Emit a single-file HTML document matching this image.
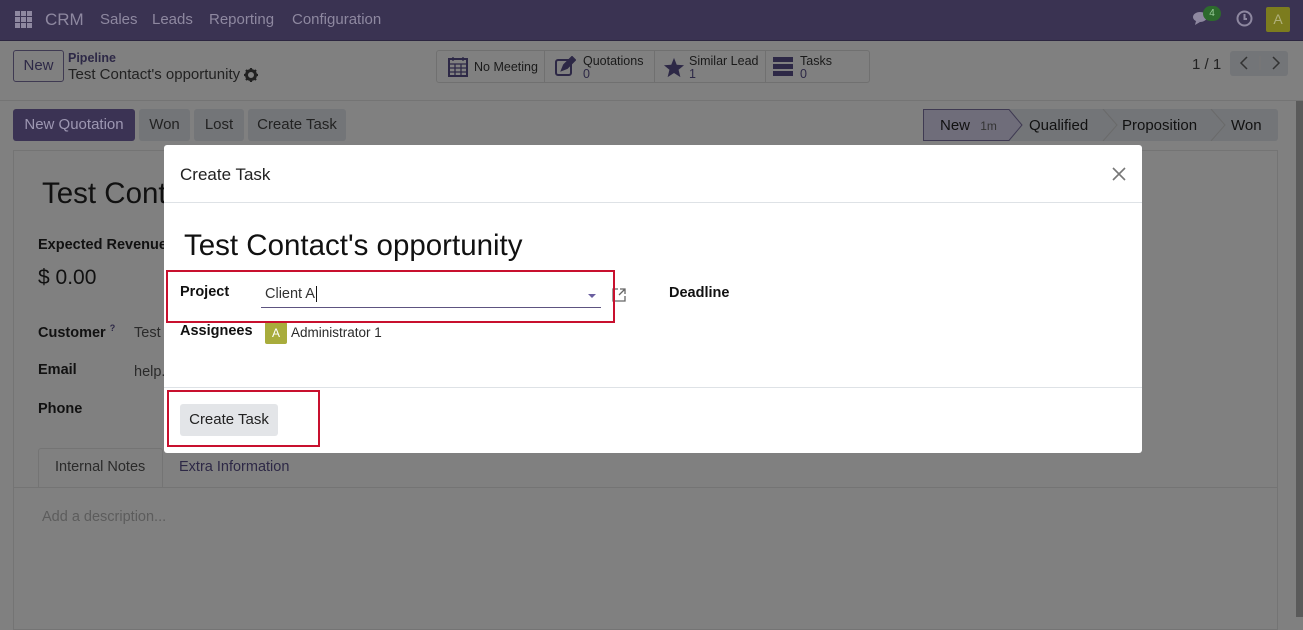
<!DOCTYPE html>
<html><head><meta charset="utf-8"><style>
*{box-sizing:border-box;margin:0;padding:0}
body{width:1303px;height:617px;overflow:hidden;background:#808080;font-family:"Liberation Sans","DejaVu Sans",sans-serif;position:relative;color:#111}
.abs{position:absolute}
.nav{left:0;top:0;width:1303px;height:41px;background:#3a3352;border-bottom:1px solid #2c2640}
.nav span{position:absolute;top:11px;font-size:15px;color:#8e88a0}
.cp{left:0;top:41px;width:1303px;height:60px;background:#808080;border-bottom:1px solid #747474}
.btn{position:absolute;border-radius:3px;font-size:15px;text-align:center;line-height:32px;height:32px;background:#737578;color:#222}
.sheet{left:13px;top:150px;width:1265px;height:480px;border:1px solid #747474;background:#808080}
.lbl{position:absolute;font-size:14.5px;font-weight:bold;color:#111}
.val{position:absolute;font-size:14.5px;color:#2a2a2a}
.modal{left:164px;top:145px;width:978px;height:308px;background:#fff;border-radius:3px}
.red{position:absolute;border:2px solid #c8102e}
.stat{position:absolute;top:51px;height:32px;border-right:1px solid #707070;font-size:12.5px;color:#1a1a1a;line-height:13px}
</style></head><body>
<div class="abs nav">
  <svg class="abs" style="left:15px;top:11px" width="17" height="17" viewBox="0 0 17 17" fill="#8e88a0"><rect x="0" y="0" width="5" height="5"/><rect x="6" y="0" width="5" height="5"/><rect x="12" y="0" width="5" height="5"/><rect x="0" y="6" width="5" height="5"/><rect x="6" y="6" width="5" height="5"/><rect x="12" y="6" width="5" height="5"/><rect x="0" y="12" width="5" height="5"/><rect x="6" y="12" width="5" height="5"/><rect x="12" y="12" width="5" height="5"/></svg>
  <span style="left:45px;font-size:17px;top:10px">CRM</span>
  <span style="left:100px">Sales</span>
  <span style="left:152px">Leads</span>
  <span style="left:209px">Reporting</span>
  <span style="left:292px">Configuration</span>
  <svg class="abs" style="left:1192px;top:10px" width="20" height="18" viewBox="0 0 20 18" fill="#8e88a0"><ellipse cx="8" cy="7" rx="7" ry="5"/><path d="M4 11 L3 15 L8 12Z"/></svg>
  <div class="abs" style="left:1203px;top:6px;width:18px;height:15px;border-radius:8px;background:#2d6a2d;color:#9c9;font-size:10px;text-align:center;line-height:15px">4</div>
  <svg class="abs" style="left:1236px;top:10px" width="17" height="17" viewBox="0 0 17 17" fill="none" stroke="#8e88a0" stroke-width="2"><circle cx="8.5" cy="8.5" r="7"/><path d="M8.5 4V9H11"/></svg>
  <div class="abs" style="left:1266px;top:7px;width:24px;height:25px;background:#7c7c1e;color:#b0b07a;font-size:14px;text-align:center;line-height:25px;border-radius:2px">A</div>
</div>
<div class="abs cp">
  <div class="abs" style="left:13px;top:9px;width:51px;height:32px;border:1px solid #3f3a52;border-radius:3px;font-size:15px;color:#2d2846;text-align:center;line-height:30px">New</div>
  <div class="abs" style="left:68px;top:10px;font-size:12.5px;font-weight:bold;color:#2d2846">Pipeline</div>
  <div class="abs" style="left:68px;top:25px;font-size:15px;color:#222">Test Contact's opportunity</div>
  <svg class="abs" style="left:244px;top:27px" width="14" height="14" viewBox="0 0 14 14"><circle cx="7" cy="7" r="4.5" fill="none" stroke="#222" stroke-width="3"/><path d="M7 0V3M7 11V14M0 7H3M11 7H14M2 2L4 4M10 10L12 12M12 2L10 4M4 10L2 12" stroke="#222" stroke-width="2.2"/></svg>
  <div class="abs" style="left:436px;top:9px;width:434px;height:33px;border:1px solid #707070;border-radius:3px"></div>
</div>
<div class="stat" style="left:437px;width:108px"><svg class="abs" style="left:11px;top:5px" width="20" height="21" viewBox="0 0 20 21" fill="none" stroke="#2d2846" stroke-width="2"><rect x="1" y="3" width="18" height="17"/><path d="M1 8H19M5 1V5M15 1V5M1 12H19M1 16H19M7 8V20M13 8V20" stroke-width="1.3"/></svg><span class="abs" style="left:37px;top:10px;white-space:nowrap">No Meeting</span></div>
<div class="stat" style="left:545px;width:110px"><svg class="abs" style="left:9px;top:5px" width="22" height="21" viewBox="0 0 22 21" fill="none" stroke="#2d2846" stroke-width="2"><rect x="2" y="4" width="15" height="15" rx="2"/><path d="M8 14L10 9 18 1 21 4 13 12Z" fill="#2d2846"/></svg><span class="abs" style="left:38px;top:4px">Quotations<br><b style="font-weight:normal;color:#2d2846">0</b></span></div>
<div class="stat" style="left:655px;width:111px"><svg class="abs" style="left:8px;top:6px" width="22" height="21" viewBox="0 0 24 23"><path d="M12 1L15 8.5 23 9 17 14 19 22 12 17.5 5 22 7 14 1 9 9 8.5Z" fill="#2d2846"/></svg><span class="abs" style="left:34px;top:4px;white-space:nowrap">Similar Lead<br><span style="color:#2d2846">1</span></span></div>
<div class="stat" style="left:766px;width:104px;border:none"><svg class="abs" style="left:7px;top:6px" width="20" height="20" viewBox="0 0 20 20" fill="#2d2846"><rect x="0" y="0" width="20" height="5"/><rect x="0" y="7" width="20" height="5"/><rect x="0" y="14" width="20" height="5"/></svg><span class="abs" style="left:34px;top:4px">Tasks<br><span style="color:#2d2846">0</span></span></div>
<div class="abs" style="left:1192px;top:56px;font-size:15px;color:#222">1 / 1</div>
<div class="abs" style="left:1230px;top:51px;width:58px;height:25px;background:#737578;border-radius:3px"></div>
<svg class="abs" style="left:1238px;top:56px" width="44" height="14" viewBox="0 0 44 14" fill="none" stroke="#333" stroke-width="1.5"><path d="M9 1L3 7 9 13M35 1L41 7 35 13"/><path d="M22 0V14" stroke="#777"/></svg>
<div class="btn" style="left:13px;top:109px;width:122px;background:#3b3354;color:#9d97b2">New Quotation</div>
<div class="btn" style="left:139px;top:109px;width:51px">Won</div>
<div class="btn" style="left:194px;top:109px;width:50px">Lost</div>
<div class="btn" style="left:248px;top:109px;width:98px">Create Task</div>
<div class="abs" style="left:923px;top:109px;width:355px;height:32px;background:#737578;border-radius:3px"></div>
<svg class="abs" style="left:923px;top:109px" width="355" height="32" viewBox="0 0 355 32"><path d="M0.5 0.5H86L99 16 86 31.5H0.5Z" fill="#6f6d7a" stroke="#3f3a52"/><path d="M180 0L194 16 180 32M288 0L302 16 288 32" fill="none" stroke="#6a6a6a"/></svg>
<div class="abs" style="left:940px;top:117px;font-size:15px">New <span style="font-size:12px;color:#333;margin-left:6px">1m</span></div>
<div class="abs" style="left:1029px;top:117px;font-size:15px">Qualified</div>
<div class="abs" style="left:1122px;top:117px;font-size:15px">Proposition</div>
<div class="abs" style="left:1231px;top:117px;font-size:15px">Won</div>
<div class="abs" style="left:1296px;top:101px;width:7px;height:516px;background:#5a5a5a"></div>
<div class="abs sheet"></div>
<div class="abs" style="left:42px;top:177px;font-size:29.5px;color:#111">Test Contact's opportunity</div>
<div class="lbl" style="left:38px;top:237px">Expected Revenue</div>
<div class="abs" style="left:38px;top:266px;font-size:21px">$ 0.00</div>
<div class="lbl" style="left:38px;top:323px">Customer <sup style="font-size:9px;color:#2d2846">?</sup></div>
<div class="val" style="left:134px;top:325px">Test Contact</div>
<div class="lbl" style="left:38px;top:362px">Email</div>
<div class="val" style="left:134px;top:364px">help.</div>
<div class="lbl" style="left:38px;top:401px">Phone</div>
<div class="abs" style="left:38px;top:448px;width:125px;height:40px;border:1px solid #747474;border-bottom:none;background:#808080;border-radius:3px 3px 0 0"></div>
<div class="abs" style="left:13px;top:487px;width:1265px;height:1px;background:#747474"></div>
<div class="abs" style="left:55px;top:459px;font-size:14.5px;color:#2a2a2a">Internal Notes</div>
<div class="abs" style="left:179px;top:459px;font-size:14.5px;color:#2d2846">Extra Information</div>
<div class="abs" style="left:42px;top:509px;font-size:14.5px;color:#5c5c5c">Add a description...</div>

<div class="abs modal">
  <div class="abs" style="left:16px;top:20px;font-size:17px;color:#222">Create Task</div>
  <svg class="abs" style="left:948px;top:22px" width="14" height="14" viewBox="0 0 14 14" stroke="#777" stroke-width="1.6"><path d="M1 1L13 13M13 1L1 13"/></svg>
  <div class="abs" style="left:0;top:57px;width:978px;height:1px;background:#dee2e6"></div>
  <div class="abs" style="left:20px;top:84px;font-size:29.5px;color:#111">Test Contact's opportunity</div>
  <div class="lbl" style="left:16px;top:139px">Project</div>
  <div class="abs" style="left:97px;top:139px;width:340px;height:24px;border-bottom:1px solid #5d5480"></div>
  <div class="abs" style="left:101px;top:141px;font-size:14.5px;color:#333">Client A<span style="border-left:1px solid #111;margin-left:1px"></span></div>
  <div class="abs" style="left:424px;top:149px;width:0;height:0;border-left:4px solid transparent;border-right:4px solid transparent;border-top:4px solid #6a5ea0"></div>
  <svg class="abs" style="left:448px;top:143px" width="14" height="14" viewBox="0 0 14 14" fill="none" stroke="#666" stroke-width="1.3"><path d="M6 1H1V13H13V8M8 1H13V6M13 1L7 7"/></svg>
  <div class="lbl" style="left:505px;top:140px">Deadline</div>
  <div class="lbl" style="left:16px;top:178px">Assignees</div>
  <div class="abs" style="left:101px;top:177px;width:22px;height:22px;background:#a8ac3c;color:#fff;font-size:12px;text-align:center;line-height:22px;border-radius:2px">A</div>
  <div class="val" style="left:127px;top:180px;font-size:13.5px">Administrator 1</div>
  <div class="abs" style="left:0;top:242px;width:978px;height:1px;background:#dee2e6"></div>
  <div class="btn" style="left:16px;top:259px;width:98px;background:#e3e5e8;color:#222">Create Task</div>
</div>
<div class="red" style="left:166px;top:270px;width:449px;height:53px"></div>
<div class="red" style="left:167px;top:390px;width:153px;height:57px"></div>
</body></html>
